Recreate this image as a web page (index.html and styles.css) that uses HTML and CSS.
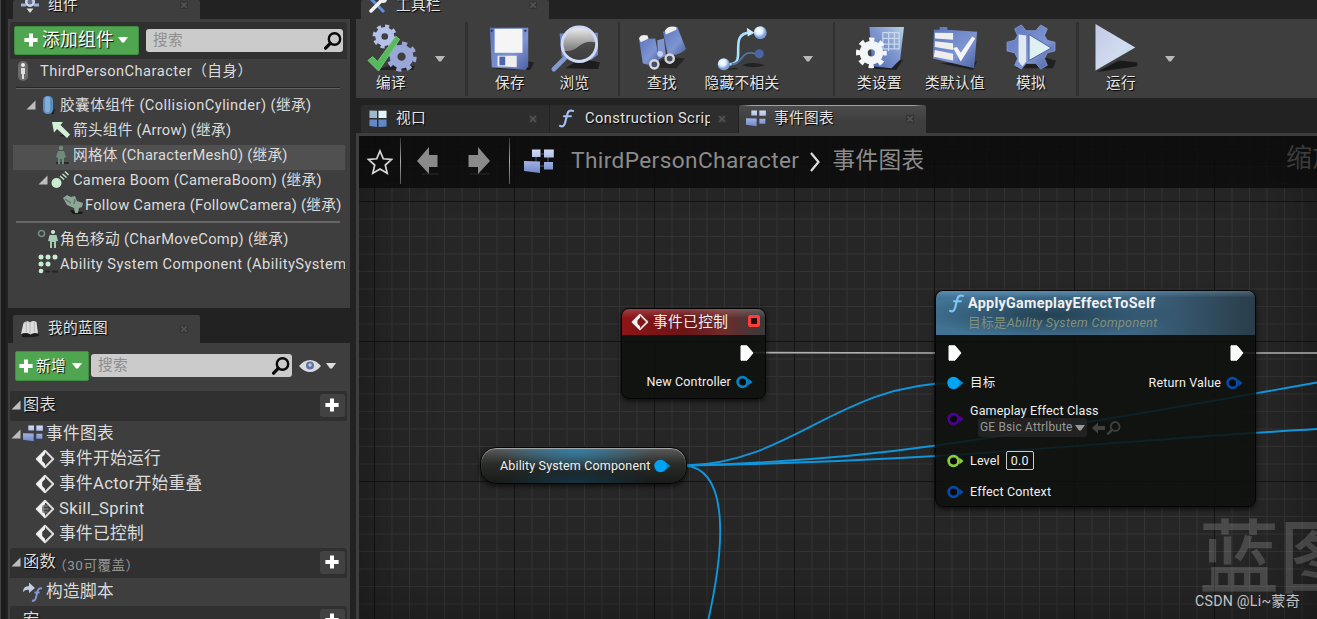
FILE: index.html
```
<!DOCTYPE html>
<html lang="zh-CN">
<head>
<meta charset="utf-8">
<title>ThirdPersonCharacter</title>
<link rel="stylesheet" href="styles.css">
</head>
<body>
<svg class="defs" width="0" height="0">
  <defs>
    <linearGradient id="blue" x1="0" y1="0" x2="0" y2="1"><stop offset="0" stop-color="#d3dcf7"/><stop offset="1" stop-color="#6f88cb"/></linearGradient>
    <linearGradient id="blueDeep" x1="0" y1="0" x2="1" y2="1"><stop offset="0" stop-color="#5b74bd"/><stop offset=".6" stop-color="#7e95d2"/><stop offset="1" stop-color="#4a5f9f"/></linearGradient>
    <linearGradient id="sheet" x1="0" y1="1" x2="1" y2="0"><stop offset="0" stop-color="#4d68b5"/><stop offset=".55" stop-color="#8097cf"/><stop offset="1" stop-color="#b7d3e4"/></linearGradient>
    <linearGradient id="pale" x1="0" y1="0" x2="1" y2="1"><stop offset="0" stop-color="#c3c8e4"/><stop offset=".6" stop-color="#d0dcf0"/><stop offset="1" stop-color="#a9d3de"/></linearGradient>
    <radialGradient id="ball" cx=".4" cy=".35"><stop offset="0" stop-color="#ffffff"/><stop offset=".6" stop-color="#dcecff"/><stop offset="1" stop-color="#7f9fd8"/></radialGradient>
    <linearGradient id="lens" x1="0" y1="0" x2="0" y2="1"><stop offset="0" stop-color="#f0f0f0"/><stop offset=".6" stop-color="#8a8a8a"/><stop offset="1" stop-color="#666"/></linearGradient>
    <symbol id="mag" viewBox="0 0 18 18"><circle cx="10.500" cy="7" r="5.700" fill="none" stroke="currentColor" stroke-width="2.400"/><path d="M6.300 11.300 1.600 16.200" stroke="currentColor" stroke-width="3.200" stroke-linecap="round"/></symbol>
    <symbol id="plus" viewBox="0 0 14 14"><path d="M5 .4h4V5h4.600v4H9v4.600H5V9H.4V5H5z" fill="#fff"/></symbol>
    <symbol id="down" viewBox="0 0 10 6"><path d="M0 0h10L6 5.500H4z" fill="currentColor"/></symbol>
    <symbol id="fold" viewBox="0 0 10 10"><path d="M9.500.5v9H.5z" fill="#bdbdbd"/></symbol>
    <symbol id="x" viewBox="0 0 8 8"><path d="M0 0h8v8H0z" fill="#343434"/><path d="M1.200 1.200l5.600 5.600m0-5.600-5.600 5.600" stroke="#555" stroke-width="1.500"/></symbol>
    <symbol id="graph" viewBox="0 0 30 25"><path d="M13 5h12M15 17h9M24 7v9M12 8v6" stroke="#3a4256" stroke-width="1.500"/><path d="M8 .5h8.500V8H8zM20 .5h9.800v8H20zM20 13h9v7.500h-9zM0 12l16 .6V24l-16-2z" fill="url(#blue)"/></symbol>
    <symbol id="event" viewBox="0 0 20 20"><path d="M10 1.800 18.200 10 10 18.200 1.800 10z" fill="none" stroke="#ddd" stroke-width="2" stroke-linejoin="round"/><path d="M10 1.500v3.700L7.200 8v4L10 14.800v3.700L1.500 10z" fill="#f2f2f2"/></symbol>
    <symbol id="func" viewBox="0 0 18 22"><path d="M1 19.500c3 1.800 5-.3 5.800-3.500L9.300 6C10 2.600 12.500.9 16 2.200M5.500 8.400h8" fill="none" stroke="currentColor" stroke-width="2.500" stroke-linecap="round"/></symbol>
    <symbol id="exec" viewBox="0 0 14 16"><path d="M1 .8h6L13 8 7 15.200H1z" fill="#fff" stroke="#fff" stroke-linejoin="round"/></symbol>
    <symbol id="ring" viewBox="0 0 17 14"><circle cx="6.500" cy="7" r="4.900" fill="#090b0a" stroke="currentColor" stroke-width="2.600"/><path d="M12.300 3.500 16.500 7l-4.200 3.500z" fill="currentColor"/></symbol>
    <symbol id="dot" viewBox="0 0 17 14"><path d="M11.500 3 16.500 7l-5 4z" fill="#0785c4"/><circle cx="6.500" cy="7" r="6.200" fill="currentColor"/></symbol>
    <symbol id="book" viewBox="0 0 20 18"><path d="M2 17q9 1 17-1l-1-4H2z" fill="#1b1b1b"/><path d="M1 14 3.500 3Q7 0 10 2.500 13 0 16.500 2L18 13.500q-4-1.500-7.500 1Q6 12 1 14z" fill="#dcdcdc"/><path d="M10 3v11M6.300 2v10m8-10v10" stroke="#aaa" stroke-width=".8"/></symbol>
  </defs>
</svg>

<div class="app">
  <aside class="side">
    <section class="dock components">
      <div class="tab tab-cut">
        <svg class="tab-ico" viewBox="0 0 20 18"><circle cx="10" cy="6" r="5" fill="#cfd6e8"/><path d="M1 9h5M14 9h5" stroke="#9fb1d6" stroke-width="3"/><path d="M6.500 12.500h7L10 17z" fill="#ddd"/><circle cx="10" cy="6" r="2.500" fill="#64718f"/></svg>
        <span>组件</span><svg class="x"><use href="#x"/></svg>
      </div>
      <div class="panel">
        <div class="add-bar">
          <button class="green add"><svg class="plus"><use href="#plus"/></svg><span>添加组件</span><svg class="down"><use href="#down"/></svg></button>
          <div class="search"><span>搜索</span><svg class="mag"><use href="#mag"/></svg></div>
        </div>
        <div class="self">
          <svg class="self-ico" viewBox="0 0 12 20"><rect x="1" y="0" width="10" height="20" rx="5" fill="#6c6c6c"/><circle cx="6" cy="4" r="2" fill="#eee"/><path d="M4 7h4v6H7v5H5v-5H4z" fill="#ddd"/></svg>
          <span>ThirdPersonCharacter（自身）</span>
        </div>
        <hr class="rule">
        <div class="tree">
          <div class="row lv1"><svg class="fold"><use href="#fold"/></svg><svg class="ico" viewBox="0 0 20 20"><path d="M9 18l7 1 1-5z" fill="#1f1f1f"/><rect x="5" y="1" width="10" height="18" rx="4.500" fill="#5a8dc0"/><rect x="7" y="1.500" width="5" height="16" rx="2.500" fill="#80aed6"/></svg><span>胶囊体组件 (CollisionCylinder) (继承)</span></div>
          <div class="row lv2"><svg class="ico" viewBox="0 0 20 20"><path d="M8 16l10 1-3-4z" fill="#222"/><path d="M1 2h11L9.500 5 19 14.500 16 18 6 9l-3 3.500z" fill="#d5f0d8"/></svg><span>箭头组件 (Arrow) (继承)</span></div>
          <div class="row lv2 picked"><svg class="ico" viewBox="0 0 20 20"><path d="M5 17h13v2H5z" fill="#252c27"/><circle cx="10" cy="3" r="2.200" fill="#6f8b79"/><path d="M7 6h6l2 6-2 1v6h-2.200v-5H9.200v5H7v-6l-2-1z" fill="#6f8b79"/></svg><span>网格体 (CharacterMesh0) (继承)</span></div>
          <div class="row lv2f"><svg class="fold"><use href="#fold"/></svg><svg class="ico" viewBox="0 0 20 20"><circle cx="6.500" cy="13" r="5" fill="#c9ecd3"/><path d="M10 6l4 3.500M12.500 4l4 3.500M15 1.500l3.500 3.500" stroke="#b9dac2" stroke-width="1.600"/></svg><span>Camera Boom (CameraBoom) (继承)</span></div>
          <div class="row lv3"><svg class="ico" viewBox="0 0 20 20"><path d="M7 15l13 2-1 2h-9z" fill="#161616"/><path d="M0 3l4-3 4 2 4-1 2 5 6 2-1 4-3 1-1 5h-3l-1-5-7-3z" fill="#8ca795"/><path d="M2 4l6 4m4-4-1 5" stroke="#5f7868" stroke-width="1.500"/></svg><span>Follow Camera (FollowCamera) (继承)</span></div>
        </div>
        <hr class="rule rule-2">
        <div class="tree tree-2">
          <div class="row lv0"><svg class="ico wide" viewBox="0 0 22 20"><circle cx="4.500" cy="4.500" r="3" fill="none" stroke="#75877c" stroke-width="1.700"/><circle cx="16" cy="3" r="2" fill="#c9ecd9"/><path d="M12.500 6h7l1.500 6-2 .3V19h-2v-6h-2v6h-2v-6.700l-2-.3z" fill="#a4ccb5"/></svg><span>角色移动 (CharMoveComp) (继承)</span></div>
          <div class="row lv0 ability"><svg class="ico wide" viewBox="0 0 22 20"><g fill="#c8ecd6"><circle cx="4" cy="3" r="2.500"/><circle cx="11" cy="3" r="2.500"/><circle cx="18" cy="3" r="2.500"/><circle cx="4" cy="10" r="2.500"/><circle cx="11" cy="10" r="2.500"/><circle cx="4" cy="17" r="2.300"/></g><path d="M8 17.500h5m2 0h6" stroke="#252525" stroke-width="1.800"/></svg><span>Ability System Component (AbilitySystem</span></div>
        </div>
      </div>
    </section>

    <section class="dock blueprint">
      <div class="tab"><svg class="tab-ico"><use href="#book"/></svg><span>我的蓝图</span><svg class="x"><use href="#x"/></svg></div>
      <div class="panel">
        <div class="new-bar">
          <button class="green new"><svg class="plus"><use href="#plus"/></svg><span>新增</span><svg class="down"><use href="#down"/></svg></button>
          <div class="search"><span>搜索</span><svg class="mag"><use href="#mag"/></svg></div>
          <svg class="eye" viewBox="0 0 22 14"><path d="M0 7q5-6 11-6t11 6q-5 6-11 6T0 7z" fill="#d9dbe0"/><circle cx="11" cy="6.500" r="4" fill="#5d749f"/><circle cx="11" cy="6" r="1.700" fill="#b9c9e6"/></svg>
          <svg class="down"><use href="#down"/></svg>
        </div>
        <div class="group"><svg class="fold"><use href="#fold"/></svg><span>图表</span><i class="add-item"><svg class="plus"><use href="#plus"/></svg></i></div>
        <div class="big-tree">
          <div class="item root"><svg class="fold"><use href="#fold"/></svg><svg class="gico"><use href="#graph"/></svg><span>事件图表</span></div>
          <div class="item"><svg class="ev"><use href="#event"/></svg><span>事件开始运行</span></div>
          <div class="item"><svg class="ev"><use href="#event"/></svg><span>事件Actor开始重叠</span></div>
          <div class="item"><svg class="ev" viewBox="0 0 20 20"><use href="#event"/><path d="M8 6v8M8.500 7h4M8.500 10h5M8.500 13h4" stroke="#999" stroke-width="1.200"/></svg><span>Skill_Sprint</span></div>
          <div class="item"><svg class="ev"><use href="#event"/></svg><span>事件已控制</span></div>
        </div>
        <div class="group"><svg class="fold"><use href="#fold"/></svg><span>函数</span><small>（30可覆盖）</small><i class="add-item"><svg class="plus"><use href="#plus"/></svg></i></div>
        <div class="item fn"><svg class="fnico" viewBox="0 0 20 20"><path d="M0 10q0-6 6-6V.5L12 6l-6 5V8Q3 7 0 10z" fill="#c3cce6"/><path d="M9 18.500q3 1 4-3l1.500-6q1-4 4.500-3M11.500 10.500h5" fill="none" stroke="#7f9bd8" stroke-width="1.900"/></svg><span>构造脚本</span></div>
        <div class="group"><span class="macro">宏</span><i class="add-item"><svg class="plus"><use href="#plus"/></svg></i></div>
      </div>
    </section>
  </aside>

  <main class="main">
    <div class="tab tab-cut top-tab">
      <svg class="tab-ico" viewBox="0 0 20 18"><path d="M3 3l13 13" stroke="#5f8fe0" stroke-width="3"/><path d="M16 2 3 15" stroke="#f2f2f2" stroke-width="3.500" stroke-linecap="round"/><circle cx="15" cy="3" r="4" fill="#eee"/></svg>
      <span>工具栏</span><svg class="x"><use href="#x"/></svg>
    </div>
    <div class="toolbar">
      <div class="tool t60">
        <svg viewBox="0 0 50 50"><path d="M10 48h38l2-4-20-3z" fill="#222"/><g fill="none" stroke="#b4c1e8"><circle cx="18.500" cy="13" r="6.700" stroke-width="6.500"/><circle cx="18.500" cy="13" r="10.800" stroke-width="3.600" stroke-dasharray="4.240 4.240"/></g><g fill="none" stroke="#98a7d8"><circle cx="36" cy="34" r="8.300" stroke-width="8"/><circle cx="36" cy="34" r="13.500" stroke-width="4.500" stroke-dasharray="5.300 5.300"/></g><path d="M1 38l5-4 5 5L30 13l4 3-22 33z" fill="#58b85f" stroke="#71cb74"/></svg>
        <span>编译</span></div>
      <div class="drop d38"><svg class="down"><use href="#down"/></svg></div>
      <i class="sep s1"></i>
      <div class="tool t64">
        <svg viewBox="0 0 50 50"><path d="M8 47l38 1 4-8-10-2z" fill="#202020"/><path d="M4 4h40v40l-3 4-35-3z" fill="url(#blueDeep)"/><path d="M9 5h29v25H9z" fill="#f5f5f5"/><path d="M12 33h20v12l-20-1z" fill="#eee"/><path d="M14 34h6v9h-6z" fill="#4d66ae"/><path d="M5 6h2v2H5zM40 6h2v2h-2z" fill="#253563"/></svg>
        <span>保存</span></div>
      <div class="tool t65">
        <svg viewBox="0 0 50 50"><path d="M15 46l34 1 2-7-20-4z" fill="#1d1d1d"/><path d="M9 10h6v23l-4 1zM40 9h9v23l-8 6z" fill="#6f85c2"/><path d="M16 34 3 47" stroke="#8299d4" stroke-width="5" stroke-linecap="round"/><circle cx="29.500" cy="21" r="18" fill="url(#lens)" stroke="#cfdaf6" stroke-width="3"/><path d="M14 28q8 1 14-4 8-7 18-5a17 17 0 0 1-32 9z" fill="#303030" opacity=".75"/></svg>
        <span>浏览</span></div>
      <i class="sep s2"></i>
      <div class="tool t76 b">
        <svg viewBox="0 0 50 50"><path d="M12 45l28 1 9-10-18-2z" fill="#262626"/><path d="M20 17l7-2 2 18-8 4z" fill="#8095cf"/><path d="M1 16l17-1 4 23q-9 7-17 3z" fill="url(#blueDeep)"/><path d="M26 8 41 3l9 23q-8 8-19 6z" fill="url(#blueDeep)"/><path d="M1 15q2-5 9-3l1 3-8 4z" fill="#eee"/><path d="M28 7q3-6 12-4v3l-11 5z" fill="#eee"/><g fill="#474f66" stroke="#d8d8d8" stroke-width="2.500"><circle cx="17" cy="42" r="4.300"/><circle cx="33" cy="36" r="4.300"/></g><circle cx="23" cy="31" r="3" fill="#c6d4ee"/></svg>
        <span>查找</span></div>
      <div class="tool t84">
        <svg viewBox="0 0 50 50"><path d="M8 48q8-4 14-1zM25 43q10-5 24 0 -12 4-24 0z" fill="#222"/><path d="M7 42c15 1 14-6 14-15s0-18 13-18" fill="none" stroke="#a8e3ff" stroke-width="2.700"/><path d="M14 42q6 0 11-7t14-4" fill="none" stroke="#53739c" stroke-width="2"/><path d="M30 4l8 5-7 4z" fill="#c9eaff"/><circle cx="6" cy="42" r="6.300" fill="url(#ball)"/><circle cx="44" cy="9" r="6.700" fill="url(#ball)"/><circle cx="43" cy="31" r="4.700" fill="#4a66a5"/></svg>
        <span>隐藏不相关</span></div>
      <div class="drop d48"><svg class="down"><use href="#down"/></svg></div>
      <i class="sep s3"></i>
      <div class="tool t75 b">
        <svg viewBox="0 0 50 50"><path d="M9 46l33 2 7-11z" fill="#202020"/><path d="M14 3l36 0-4 34-9 9-20-2z" fill="url(#sheet)"/><path d="M28 9h17v17H28zM28 15h17M28 21h17M34 8v20M40 8v18" fill="none" stroke="#c8d8f0" stroke-width="1.300"/><g fill="none" stroke="#f3f6f8"><circle cx="16" cy="30" r="8" stroke-width="8.500"/><circle cx="16" cy="30" r="13.800" stroke-width="4.500" stroke-dasharray="5.420 5.420" stroke-dashoffset="2.700"/></g></svg>
        <span>类设置</span></div>
      <div class="tool t76">
        <svg viewBox="0 0 50 50"><path d="M9 41l35 7 4-9z" fill="#202020"/><path d="M3 6h6V3h8v3l31 2-3 38L2 36z" fill="url(#blueDeep)"/><path d="M4 9l19 .5v7L4 15zM4 18l19 2v7L4 24zM4 27l19 4v7L3 34z" fill="#eee"/><path d="M23 25l4-1 4 6 12-17 3 2-15 24z" fill="#f5f5f5"/></svg>
        <span>类默认值</span></div>
      <div class="tool t76">
        <svg viewBox="0 0 50 50"><path d="M8 46l40 0 3-8-16-4z" fill="#202020"/><path d="M20 8 16 1l6-1 4 0z" fill="none"/><path d="M0 19l8-2 3-5-3-7 7-4 5 6h10l5-6 7 4-3 7 3 5 8 2v9l-8 2-3 6 3 7-7 4-5-6H20l-5 6-7-4 3-7-3-6-8-2z" fill="url(#blueDeep)" stroke="#8a9eda" stroke-width=".8"/><path d="M12 11l8 1v27l-4 5-4-5z" fill="#dfe9ee"/><path d="M23 11 46 25 23 38z" fill="#dff0f2" stroke="#4d619f"/></svg>
        <span>模拟</span></div>
      <i class="sep s4"></i>
      <div class="tool t64 play">
        <svg viewBox="0 0 50 50"><path d="M2 50l42-6v-4L25 38z" fill="#191919"/><path d="M.5 0 42 24.500.5 48.500z" fill="url(#pale)"/></svg>
        <span>运行</span></div>
      <div class="drop d34"><svg class="down"><use href="#down"/></svg></div>
    </div>

    <div class="doc-tabs">
      <div class="tab dim"><svg class="tab-ico" viewBox="0 0 20 20"><path d="M1 1.500l8 .3v7.700H1z" fill="#9db7cc"/><path d="M10.500 1.800H19v7.700h-8.500z" fill="#e5f4f8"/><path d="M1 11h8v8l-8-1zM10.500 11H19v7.500l-8.500.5z" fill="#6487c7"/></svg><span>视口</span><svg class="x"><use href="#x"/></svg></div>
      <div class="tab dim"><svg class="tab-ico fi"><use href="#func"/></svg><span class="clip">Construction Script</span><svg class="x"><use href="#x"/></svg></div>
      <div class="tab active"><svg class="tab-ico"><use href="#graph"/></svg><span>事件图表</span><svg class="x"><use href="#x"/></svg></div>
    </div>

    <div class="canvas">
      <div class="crumbs">
        <svg class="star" viewBox="0 0 26 26"><path d="M13 2l3.300 7.800 8.200.7-6.200 5.500 1.900 8.200L13 20l-7.200 4.200L7.700 16 1.500 10.500l8.200-.7z" fill="none" stroke="#d9d9d9" stroke-width="1.700"/></svg>
        <i class="bar"></i>
        <svg class="nav" viewBox="0 0 22 28"><path d="M5 27h17" stroke="#222" stroke-width="1.500"/><path d="M0 14 12 0v8h8.500v12H12v7z" fill="#8a8a8a"/></svg>
        <svg class="nav next" viewBox="0 0 22 28"><path d="M2 27h19" stroke="#222" stroke-width="1.500"/><path d="M22 14 10 0v8H.5v12H10v7z" fill="#8a8a8a"/></svg>
        <i class="bar"></i>
        <svg class="gbig"><use href="#graph"/></svg>
        <span>ThirdPersonCharacter</span>
        <svg class="chev" viewBox="0 0 12 20"><path d="M2 1l7.500 9L2 19" fill="none" stroke="#ddd" stroke-width="2.200"/></svg>
        <span>事件图表</span>
        <span class="zoom">缩放</span>
      </div>

      <svg class="wires" viewBox="359 136 958 483">
        <path d="M746 352.500 936 353M1236 353h81" stroke="#b0b0b0" stroke-width="1.700"/>
        <g fill="none" stroke="#0f96dc" stroke-width="1.900">
          <path d="M662 465.500h24C790 464 840 383 955 383"/>
          <path d="M662 465.500h24C760 463.500 840 459 936 445.500S1180 407 1317 382.500"/>
          <path d="M662 465.500h24C780 464 850 461 936 456S1180 437 1317 429"/>
          <path d="M662 465.500h22C731 468 724 550 708.500 619"/>
        </g>
      </svg>

      <div class="watermark">蓝图</div>

      <div class="node n-event">
        <div class="head"><svg class="ev"><use href="#event"/></svg><span>事件已控制</span><i class="delegate"></i></div>
        <div class="pin out e1"><svg class="exec"><use href="#exec"/></svg></div>
        <div class="pin out e2"><span>New Controller</span><svg class="ring sky"><use href="#ring"/></svg></div>
      </div>

      <div class="node n-var"><span>Ability System Component</span><svg class="ring cyan"><use href="#dot"/></svg></div>

      <div class="node n-func">
        <div class="head">
          <svg class="f"><use href="#func"/></svg>
          <div><b>ApplyGameplayEffectToSelf</b><em>目标是<i>Ability System Component</i></em></div>
        </div>
        <div class="body">
          <div class="line l1"><svg class="exec"><use href="#exec"/></svg><svg class="exec"><use href="#exec"/></svg></div>
          <div class="line l2"><svg class="ring cyan"><use href="#dot"/></svg><span>目标</span><span class="ret">Return Value</span><svg class="ring navy"><use href="#ring"/></svg></div>
          <div class="line l3"><svg class="ring violet"><use href="#ring"/></svg>
            <div class="stack"><span>Gameplay Effect Class</span>
              <div class="pick"><div class="combo"><span>GE Bsic Attrlbute</span><svg class="down"><use href="#down"/></svg></div>
                <svg class="back" viewBox="0 0 13 12"><path d="M0 6 6 .5V4h7v4H6v3.500z" fill="#424242"/></svg><svg class="mag"><use href="#mag"/></svg></div></div></div>
          <div class="line l4"><svg class="ring lime"><use href="#ring"/></svg><span>Level</span><span class="num">0.0</span></div>
          <div class="line l5"><svg class="ring navy"><use href="#ring"/></svg><span>Effect Context</span></div>
        </div>
      </div>
      <div class="credit">CSDN @Li~蒙奇</div>
    </div>
  </main>
</div>
</body>
</html>
```
FILE: styles.css
```
* { box-sizing: border-box; }
html, body { margin: 0; height: 100%; overflow: hidden; }
body { background: #222; color: #dcdcdc; font-family: Roboto, "Noto Sans CJK SC", sans-serif; font-size: 14.67px; letter-spacing: .33px; line-height: 20px; white-space: nowrap; }
svg { display: block; flex: none; overflow: visible; }
.defs { position: absolute; }
button { font: inherit; letter-spacing: inherit; color: #fff; padding: 0; }
.app { display: flex; width: 1317px; height: 619px; overflow: hidden; }
.down { width: 10px; height: 6px; }
.x { width: 8px; height: 8px; margin-left: auto; }

/* tabs */
.tab { display: flex; align-items: center; width: 187px; height: 28px; padding: 0 12px 0 7px; background: #3e3e3e; color: #e4e4e4; text-shadow: 1px 1px 1px #000; border-radius: 2px 2px 0 0; }
.tab span { margin-bottom: 2px; }
.tab-ico { width: 20px; height: 18px; margin-right: 8px; }
.tab-cut { height: 19px; align-items: flex-end; }
.tab-cut .tab-ico { margin-bottom: 5px; }
.tab-cut span { margin-bottom: 4px; }
.tab-cut .x { margin-bottom: 10px; }

/* side column */
.side { width: 356px; flex: none; padding: 0 6px 0 8px; background: linear-gradient(90deg, #444 0 1px, #1b1b1b 1px 6px, #222 6px); }
.side .tab { margin-left: 5px; }
.panel { background: #3e3e3e; padding: 0 3px 0 2px; overflow: hidden; }
.components .panel { height: 289px; padding-top: 3px; }
.blueprint { margin-top: 7px; }
.blueprint .panel { height: 276px; }
.green { display: flex; align-items: center; background: #50a650; border: 1px solid #3f8d41; border-radius: 2px; text-shadow: 1px 1px 1px #000; }
.plus { width: 14px; height: 14px; }
.add-bar { display: flex; align-items: center; gap: 7px; height: 37px; padding: 0 4px; background: #303030; border-radius: 3px 3px 0 0; }
.add { width: 125px; height: 29px; padding: 0 0 1px 9px; font-size: 17.7px; gap: 4px; }
.search { display: flex; align-items: center; justify-content: space-between; width: 197px; height: 23px; padding: 0 1px 0 7px; border-radius: 3px; background: #cbcbcb; color: #8e8e8e; }
.search span { margin-bottom: 2px; }
.search .mag { width: 18px; height: 18px; color: #090909; }
.self { display: flex; align-items: center; height: 24px; padding-left: 7px; gap: 11px; letter-spacing: .47px; }
.self-ico { width: 12px; height: 20px; }
.rule { border: 0; height: 2px; margin: 4px 7px 6px 6px; background: linear-gradient(#262626 50%, #626262 50%); }
.tree { margin: 0 2px 0 3px; }
.row { display: flex; align-items: center; height: 25px; padding-bottom: 5px; overflow: hidden; }
.row .ico { width: 20px; height: 20px; margin-right: 2px; }
.row .ico.wide { width: 22px; margin-right: 1px; }
.fold { width: 10px; height: 10px; }
.lv1 { padding-left: 13px; letter-spacing: .42px; }
.lv1 .ico { margin-left: 2px; }
.lv2 { padding-left: 38px; letter-spacing: .24px; }
.picked { background: #505050; }
.lv2f { padding-left: 26px; }
.lv2f .fold, .lv2f .ico { margin-left: -1px; }
.lv2f .ico { margin: 0 3px 0 2px; }
.lv3 { padding-left: 50px; letter-spacing: .27px; }
.rule-2 { margin: 1px 7px 6px 6px; background: #666; }
.lv0 { padding-left: 24px; }
.ability { letter-spacing: .43px; }

.new-bar { display: flex; align-items: center; height: 48px; padding: 0 0 3px 5px; }
.new { width: 74px; height: 30px; padding-left: 3px; gap: 3px; }
.new .down { margin-left: 3px; }
.new-bar .search { width: 201px; margin-left: 2px; }
.new-bar .search .mag { margin-right: 1px; }
.eye { width: 22px; height: 14px; margin: 0 5px 0 7px; }
.group { display: flex; align-items: center; height: 30px; padding: 0 2px 2px 1px; background: #303030; border-radius: 3px 3px 0 0; font-size: 16.3px; text-shadow: 1px 1px 1px #000; }
.group .fold { margin-right: 2px; }
.group small { font-size: 13.5px; letter-spacing: .5px; color: #949494; text-shadow: none; margin: 6px 0 0 -3px; }
.add-item { display: flex; align-items: center; justify-content: center; width: 25px; height: 23px; margin-left: auto; padding-right: 1px; background: #424242; border-radius: 3px; }
.big-tree { height: 127px; }
.item { display: flex; align-items: center; height: 25px; font-size: 16.67px; padding-left: 25px; gap: 4px; }
.root { padding-left: 1px; gap: 2px; }
.gico { width: 20px; height: 17px; margin-right: 1px; }
.ev { width: 20px; height: 20px; }
.fn { height: 28px; padding: 0 0 1px 13px; gap: 3px; }
.fnico { width: 20px; height: 20px; }
.macro { padding-left: 12px; }

/* main column */
.main { flex: 1; min-width: 0; display: flex; flex-direction: column; }
.top-tab { margin-left: 5px; width: 188px; }
.toolbar { display: flex; align-items: flex-start; height: 79px; padding-left: 5px; background: #3e3e3e; }
.tool { display: flex; flex-direction: column; align-items: center; padding-top: 5px; color: #e6e6e6; text-shadow: 1px 1px 1px #000; }
.tool svg { width: 48px; height: 48px; margin-bottom: 1px; }
.play svg { margin-right: 4px; }
.t60 { width: 60px; } .t64 { width: 64px; } .t65 { width: 65px; } .t75 { width: 75px; } .t76 { width: 76px; } .t84 { width: 84px; }
.drop { display: flex; justify-content: center; padding-top: 37px; color: #b8b8b8; }
.d38 { width: 38px; } .d48 { width: 48px; } .d34 { width: 34px; }
.sep { width: 2px; height: 74px; margin-top: 3px; background: #303030; flex: none; }
.s1 { width: 3px; margin-left: 6px; margin-right: 10px; }
.s2 { margin-left: 11px; margin-right: 4px; }
.s3 { margin-left: 1px; margin-right: 7px; }
.s4 { width: 3px; margin-left: 7px; margin-right: 10px; }
.doc-tabs { display: flex; gap: 1px; padding: 7px 0 0 5px; height: 35px; }
.doc-tabs .tab { width: 188px; }
.doc-tabs .tab-ico { height: 19px; margin-bottom: 1px; }
.dim { background: #2d2d2d; }
.fi { color: #a7c0f5; height: 20px; }
.clip { width: 125px; overflow: hidden; letter-spacing: .42px; }
.doc-tabs .active { position: relative; width: 187px; background: linear-gradient(#4c4c4c, #3e3e3e 60%); }
.active::before { content: ""; position: absolute; inset: 0 3px auto; height: 1px; background: linear-gradient(90deg, transparent, #c4aa22 5% 95%, transparent); }

/* graph */
.canvas { position: relative; flex: 1; border: solid #3e3e3e; border-width: 3px 0 0 3px; overflow: hidden; background-color: #262626;
  background-image: linear-gradient(90deg, #131313 1px, transparent 1px), linear-gradient(#131313 1px, transparent 1px), linear-gradient(90deg, #343434 1px, transparent 1px), linear-gradient(#343434 1px, transparent 1px);
  background-size: 140px 140px, 140px 140px, 17.5px 17.5px, 17.5px 17.5px; background-position: 15px 65px; }
.canvas::before { content: ""; position: absolute; inset: 0; box-shadow: inset 0 0 70px rgba(0,0,0,.4); }
.crumbs { position: relative; display: flex; align-items: center; height: 52px; background: rgba(10,10,10,.8); color: #8b8b8b; font-size: 22.67px; letter-spacing: .38px; line-height: 30px; padding-bottom: 2px; }
.star { width: 26px; height: 26px; margin: 1px 7px 0 8px; }
.bar { width: 1px; height: 46px; background: linear-gradient(#333, #aaa 50%, #555); }
.nav { width: 22px; height: 28px; margin-left: 16px; }
.next { margin: 0 19px 0 29px; }
.gbig { width: 30px; height: 25px; margin: 0 17px 0 14px; }
.chev { width: 12px; height: 20px; margin: 2px 11px 0 10px; }
.zoom { position: absolute; left: 927px; top: 7px; font-size: 26px; color: #3b3b3b; }
.wires { position: absolute; left: 0; top: 0; width: 958px; height: 483px; }
.watermark { position: absolute; left: 840px; top: 373px; font-size: 80px; line-height: 100px; font-weight: 500; color: rgba(255,255,255,.17); }
.credit { position: absolute; left: 836px; top: 455px; font-size: 14.2px; letter-spacing: .25px; color: #c4c4c4; text-shadow: 1px 1px 1px #222; }

.node { position: absolute; border: 1px solid #050505; border-radius: 8px; background: rgba(13,16,13,.87); box-shadow: 0 2px 5px rgba(0,0,0,.65); color: #f0f0f0; font-size: 12.5px; letter-spacing: .15px; overflow: hidden; }
.exec { width: 14px; height: 16px; }
.ring { width: 17px; height: 14px; }
.cyan { color: #00a4f4; } .sky { color: #0883c4; } .navy { color: #064aaa; } .violet { color: #500098; } .lime { color: #89cf39; }
.n-event { left: 262px; top: 172px; width: 145px; height: 91px; }
.n-event .head { display: flex; align-items: center; height: 26px; padding: 0 5px 0 8px; font-size: 14.67px; letter-spacing: .4px; background: linear-gradient(#ffffff30, transparent 35%), linear-gradient(90deg, #8e1416, #6b1517 45%, #702b2c 70%, #3a3a39 98%); }
.n-event .ev { width: 20px; height: 18px; margin-right: 3px; }
.delegate { width: 12px; height: 12px; margin: -3px 0 0 auto; border: 3px solid #ff3c3c; border-radius: 2px; background: #260b0b; }
.pin { display: flex; align-items: center; justify-content: flex-end; }
.e1 { height: 36px; padding-right: 11px; }
.e2 { height: 22px; gap: 5px; padding-right: 12px; }
.n-var { left: 121px; top: 311px; width: 207px; height: 37px; border-radius: 16px; display: flex; align-items: center; padding-left: 19px; gap: 4px;
  background: radial-gradient(ellipse 80px 24px at 46% 0, #3180a9, transparent), radial-gradient(ellipse 80px 16px at 46% 100%, #153544, transparent), linear-gradient(#5b5b5b, #292c29 45%, #171a17); box-shadow: inset 0 1px 1px #aaa, 0 2px 5px #000a; }
.n-func { left: 576px; top: 154px; width: 321px; height: 217px; }
.n-func .head { display: flex; height: 44px; padding: 3px 0 0 13px; gap: 3px; background: linear-gradient(#9fd5ff44, transparent 15%), radial-gradient(ellipse 130px 22px at 35% 55%, #1b3442cc, transparent), linear-gradient(90deg, #427394 20%, #3e6886 60%, #2a3d49); }
.f { width: 16px; height: 19px; color: #7cc8f8; }
.head b, .head em { display: block; }
.head b { font-size: 14.3px; letter-spacing: .31px; line-height: 19px; }
.head em { font-style: normal; font-size: 12.6px; letter-spacing: .3px; line-height: 20px; color: #80917c; }
.line { display: flex; align-items: center; padding: 0 11px; gap: 6px; }
.l1 { justify-content: space-between; height: 36px; padding-left: 12px; }
.l2 { height: 24px; padding-right: 12px; }
.ret { margin-left: auto; }
.l2 .navy { margin-left: -1px; }
.l3 { height: 46px; padding-top: 2px; }
.stack { line-height: 17px; }
.pick { display: flex; align-items: center; height: 17px; margin-left: 8px; }
.combo { display: flex; align-items: center; width: 109px; height: 19px; padding-left: 2px; gap: 2px; background: #2c2c2c9c; border-radius: 3px; color: #989898; font-size: 11.9px; letter-spacing: .2px; }
.pick .back { width: 13px; height: 12px; margin: 0 2px 0 5px; }
.pick .mag { width: 14px; height: 14px; color: #3d403d; }
.l4 { height: 39px; }
.num { width: 28px; height: 19px; border: 1px solid #ccc; border-radius: 2px; text-align: center; line-height: 17px; }
.l5 { height: 23px; }
```
